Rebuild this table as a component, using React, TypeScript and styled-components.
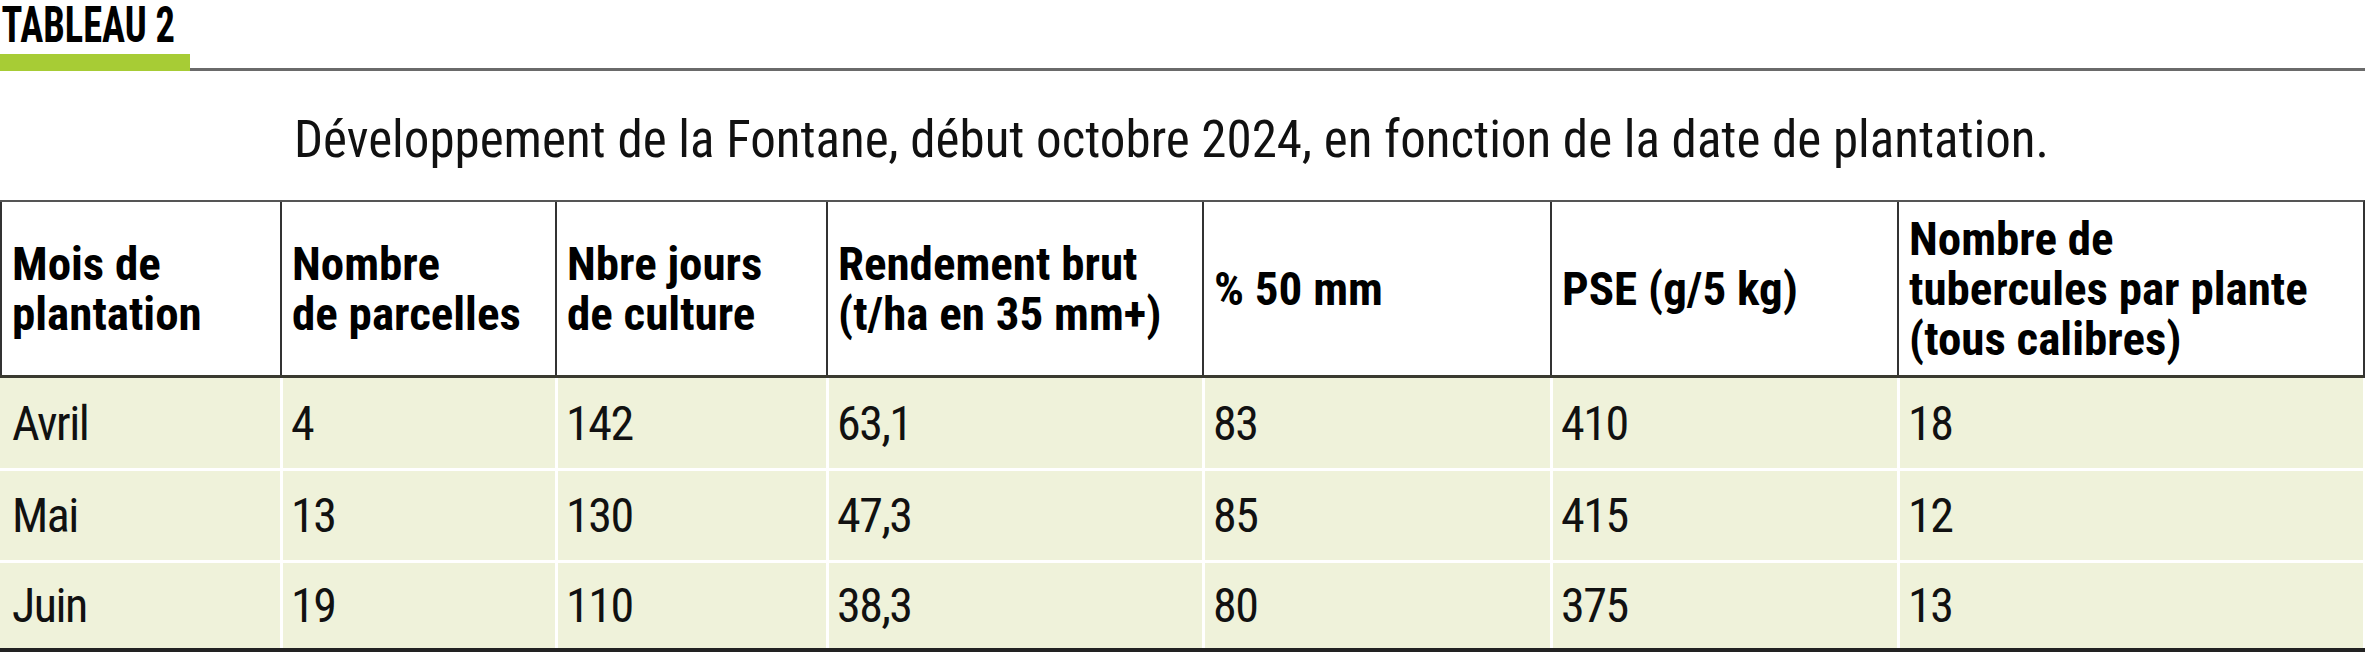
import React from 'react';
import styled, { createGlobalStyle } from 'styled-components';

const COLS = '280px 275px 271px 376px 348px 347px 466px';

const headers = [
    ['Mois de', 'plantation'],
    ['Nombre', 'de parcelles'],
    ['Nbre jours', 'de culture'],
    ['Rendement brut', '(t/ha en 35 mm+)'],
    ['% 50 mm'],
    ['PSE (g/5 kg)'],
    ['Nombre de', 'tubercules par plante', '(tous calibres)'],
];

const rows = [
    ['Avril', '4', '142', '63,1', '83', '410', '18'],
    ['Mai', '13', '130', '47,3', '85', '415', '12'],
    ['Juin', '19', '110', '38,3', '80', '375', '13'],
];

const App = () => {
    return (
        <>
            <GlobalStyle />
            <Page>
                <Kicker>TABLEAU 2</Kicker>
                <Rule>
                    <GreenBar />
                    <GreyLine />
                </Rule>
                <Title>
                    Développement de la Fontane, début octobre 2024, en fonction de la date de plantation.
                </Title>
                <Table>
                    <HeaderRow>
                        {headers.map((lines, i) => (
                            <HeaderCell key={i}>
                                <div>
                                    {lines.map((l) => (
                                        <div key={l}>{l}</div>
                                    ))}
                                </div>
                            </HeaderCell>
                        ))}
                    </HeaderRow>
                    {rows.map((row, r) => (
                        <DataRow key={r} last={r === rows.length - 1} first={r === 0}>
                            {row.map((v, i) => (
                                <DataCell key={i} first={i === 0}>
                                    {v}
                                </DataCell>
                            ))}
                        </DataRow>
                    ))}
                </Table>
            </Page>
        </>
    );
};

export default App;

// Styled Components
const GlobalStyle = createGlobalStyle`
    html, body {
        margin: 0;
        padding: 0;
        background: #fff;
    }
    body {
        font-family: Roboto, "Liberation Sans", Arial, sans-serif;
        font-stretch: 75%;
        color: #111;
    }
`;

const Page = styled.div`
    width: 2365px;
    padding-top: 2px;
`;

const Kicker = styled.div`
    font-size: 50px;
    line-height: 46px;
    font-weight: bold;
    transform: scaleX(0.77);
    transform-origin: left center;
    color: #000;
    padding-left: 2px;
`;

const Rule = styled.div`
    display: flex;
    align-items: flex-end;
    margin-top: 6px;
`;

const GreenBar = styled.div`
    width: 190px;
    height: 17px;
    background: #a7cc35;
`;

const GreyLine = styled.div`
    flex: 1;
    height: 3px;
    background: #6a6a6a;
`;

const Title = styled.div`
    margin-top: 41px;
    font-size: 51px;
    font-weight: 400;
    line-height: 56px;
    text-align: center;
    padding-right: 22px;
    color: #111;
`;

const Table = styled.div`
    margin-top: 32px;
`;

const HeaderRow = styled.div`
    display: grid;
    grid-template-columns: ${COLS};
    height: 178px;
    box-sizing: border-box;
    border-top: 2px solid #555;
    border-bottom: 3px solid #3a3a30;
    border-right: 2px solid #333;
    width: 2365px;
`;

const HeaderCell = styled.div`
    display: flex;
    align-items: center;
    box-sizing: border-box;
    border-left: 2px solid #333;
    padding-left: 10px;
    font-weight: bold;
    font-size: 47px;
    line-height: 50px;
    color: #000;
`;

const DataRow = styled.div<{ first?: boolean; last?: boolean }>`
    display: grid;
    grid-template-columns: ${COLS};
    box-sizing: border-box;
    height: ${({ first }) => (first ? '90px' : '92px')};
    border-top: ${({ first }) => (first ? 'none' : '3px solid #fff')};
    border-bottom: ${({ last }) => (last ? '4px solid #222' : 'none')};
    width: 2365px;
`;

const DataCell = styled.div<{ first?: boolean }>`
    display: flex;
    align-items: center;
    box-sizing: border-box;
    background: #eff2da;
    border-left: ${({ first }) => (first ? 'none' : '3px solid #fff')};
    padding-left: ${({ first }) => (first ? '12px' : '8px')};
    font-size: 48px;
    font-weight: 380;
    letter-spacing: -1.5px;
    color: #111;
`;
